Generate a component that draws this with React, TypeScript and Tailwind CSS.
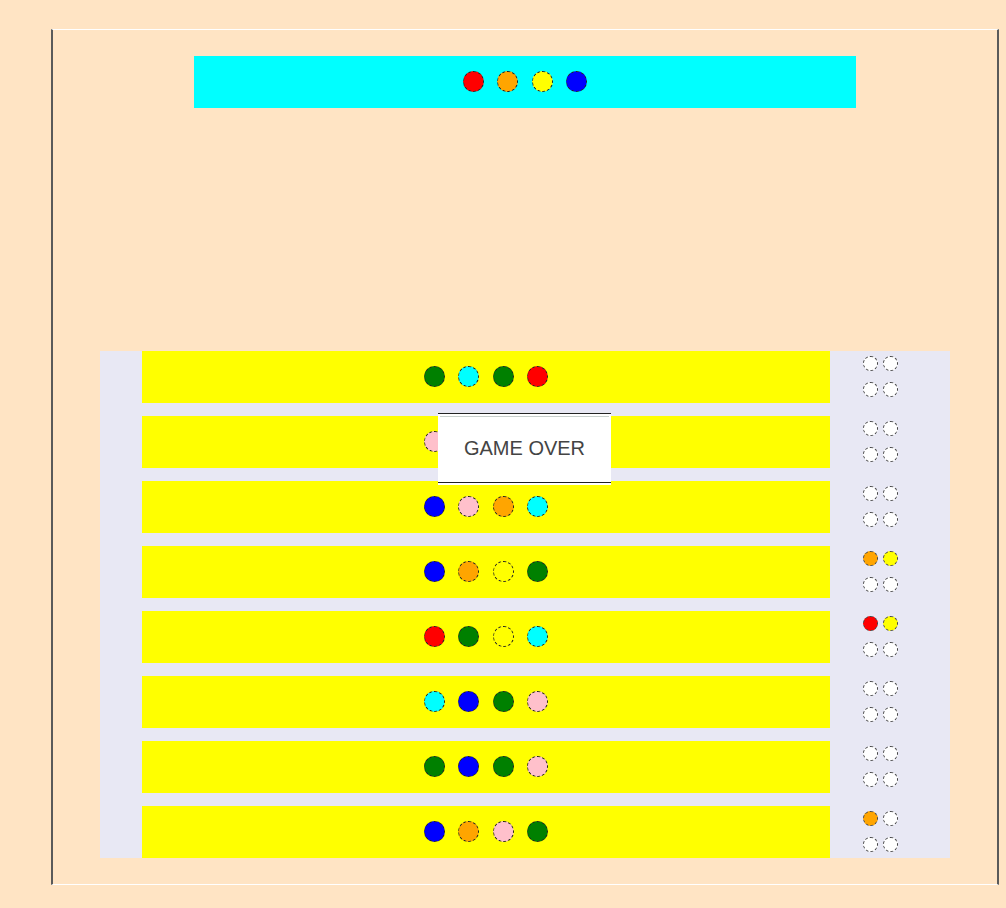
import React from "react";

const COLORS: Record<string, string> = {
  red: "bg-[#ff0000]",
  orange: "bg-[#ffa500]",
  yellow: "bg-[#ffff00]",
  blue: "bg-[#0000ff]",
  green: "bg-[#008000]",
  cyan: "bg-[#00ffff]",
  pink: "bg-[#ffc0cb]",
  white: "bg-white",
};

const secret = ["red", "orange", "yellow", "blue"];

const rows: { guess: string[]; hints: string[] }[] = [
  { guess: ["green", "cyan", "green", "red"], hints: ["white", "white", "white", "white"] },
  { guess: ["pink", "blue", "cyan", "orange"], hints: ["white", "white", "white", "white"] },
  { guess: ["blue", "pink", "orange", "cyan"], hints: ["white", "white", "white", "white"] },
  { guess: ["blue", "orange", "yellow", "green"], hints: ["orange", "yellow", "white", "white"] },
  { guess: ["red", "green", "yellow", "cyan"], hints: ["red", "yellow", "white", "white"] },
  { guess: ["cyan", "blue", "green", "pink"], hints: ["white", "white", "white", "white"] },
  { guess: ["green", "blue", "green", "pink"], hints: ["white", "white", "white", "white"] },
  { guess: ["blue", "orange", "pink", "green"], hints: ["orange", "white", "white", "white"] },
];

function Peg({ color }: { color: string }) {
  return (
    <div
      className={`w-[21px] h-[21px] rounded-full border border-dashed border-[#222] ${COLORS[color]}`}
    />
  );
}

function Hint({ color }: { color: string }) {
  return (
    <div
      className={`w-[15px] h-[15px] rounded-full border border-dashed border-[#444] ${COLORS[color]}`}
    />
  );
}

export default function App() {
  return (
    <div className="min-h-screen bg-[#ffe4c4] pt-[29px] pl-[51px]">
      <div className="w-[948px] h-[856px] border-l-2 border-r-2 border-t border-b border-l-[#5a5a5a] border-r-[#5a5a5a] border-t-white border-b-white pt-[26px]">
        {/* secret code */}
        <div className="mx-auto w-[662px] h-[52px] bg-[#00ffff] flex items-center justify-center gap-[13.5px] pb-px">
          {secret.map((c, i) => (
            <Peg key={i} color={c} />
          ))}
        </div>

        {/* board */}
        <div className="relative mx-auto mt-[243px] w-[850px] bg-[#e8e8f4] flex flex-col gap-[13px]">
          {rows.map((r, i) => (
            <div key={i} className="flex h-[52px]">
              <div className="w-[42px]" />
              <div className="w-[688px] bg-[#ffff00] flex items-center justify-center gap-[13.5px] pb-px">
                {r.guess.map((c, j) => (
                  <Peg key={j} color={c} />
                ))}
              </div>
              <div className="flex-1 flex items-center pl-[33px] pb-[2px]">
                <div className="grid grid-cols-[15px_15px] gap-x-[5px] gap-y-[11px]">
                  {r.hints.map((c, j) => (
                    <Hint key={j} color={c} />
                  ))}
                </div>
              </div>
            </div>
          ))}

          {/* game over popup */}
          <div className="absolute left-[338px] top-[62px] w-[173px] h-[72px] bg-white flex flex-col">
            <div className="h-px bg-[#222]" />
            <div className="mt-[2px] mx-[2px] h-px bg-[#c8cfcc]" />
            <div
              className="flex-1 flex items-center justify-center pb-[4px] text-[20px] text-[#444]"
              style={{ fontFamily: '"Liberation Sans", Arial, sans-serif' }}
            >
              GAME OVER
            </div>
            <div className="mb-[2px] h-px bg-[#222]" />
          </div>
        </div>
      </div>
    </div>
  );
}
